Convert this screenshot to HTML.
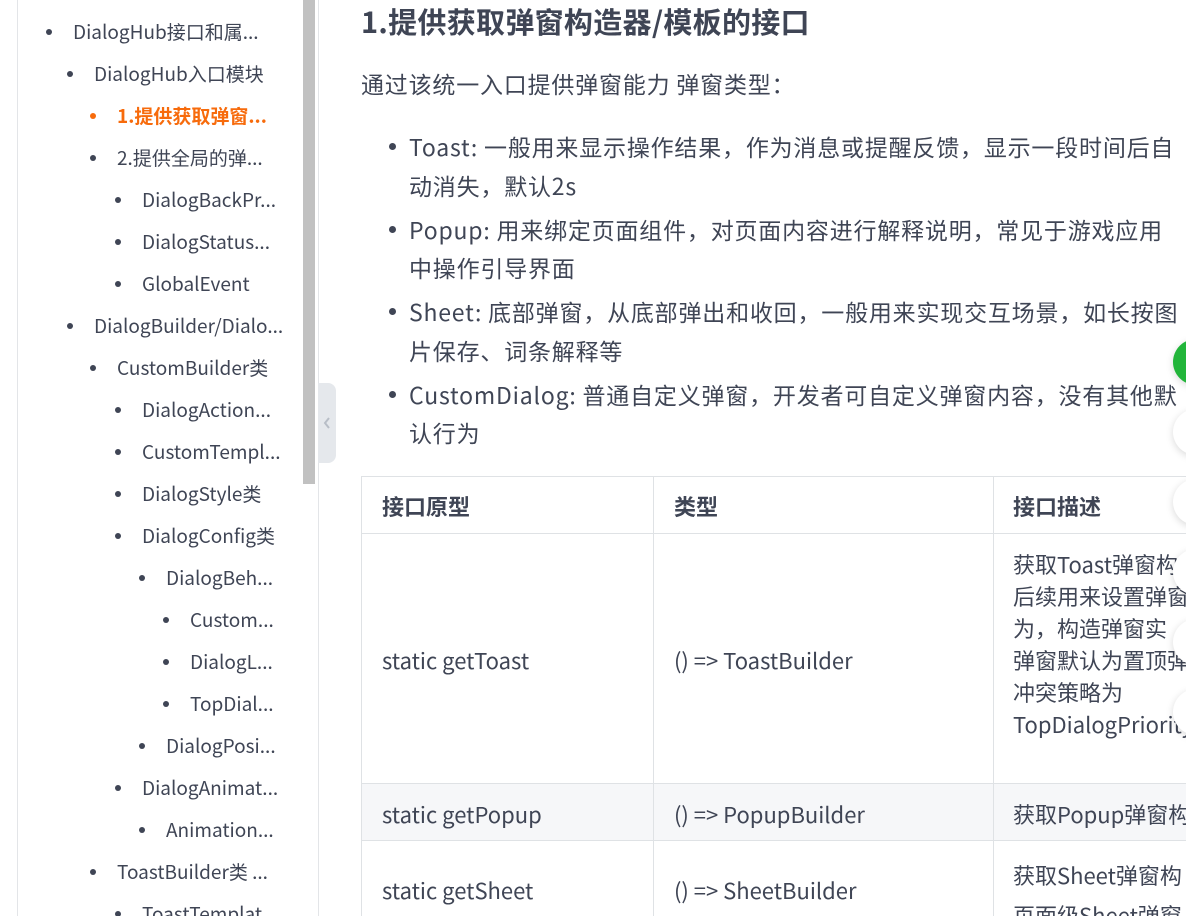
<!DOCTYPE html>
<html><head><meta charset="utf-8"><style>
html,body{margin:0;padding:0;width:1186px;height:916px;overflow:hidden;background:#fff;}
body{font-family:"Noto Sans CJK SC","Liberation Sans",sans-serif;color:#3f4555;position:relative;}
.sb{position:absolute;left:17px;top:0;width:1px;height:916px;background:#e3e5e8;}
.nav div{position:absolute;font-size:19px;white-space:nowrap;line-height:22px;color:#3f4555;}
.nav div::before{content:"";position:absolute;left:-27px;top:8px;width:6px;height:6px;border-radius:50%;background:#3f4555;}
.nav .act{color:#f76b0c;font-weight:bold;}
.nav .act::before{background:#f76b0c;}
.scroll{position:absolute;left:303px;top:0;width:12px;height:484px;background:#c1c1c1;}
.vline{position:absolute;left:318px;top:0;width:1px;height:916px;background:#e3e5e8;}
.tab{position:absolute;left:318px;top:383px;width:18px;height:80px;background:#e5e8ec;border-radius:0 8px 8px 0;}
.m{position:absolute;white-space:nowrap;font-size:23px;letter-spacing:0.8px;line-height:26px;}
.t{font-size:22px;letter-spacing:0;}
.li::before{content:"";position:absolute;left:-20px;top:10px;width:7px;height:7px;border-radius:50%;background:#3f4555;}
.h{font-weight:bold;font-size:29px;letter-spacing:0.3px;}
.hl{position:absolute;left:361px;width:900px;height:1px;background:#dfe2e5;}
.vl{position:absolute;top:476px;width:1px;height:440px;background:#dfe2e5;}
.circ{position:absolute;left:1173px;width:46px;height:46px;border-radius:50%;background:#fff;box-shadow:0 2px 8px rgba(0,0,0,0.15);}
</style></head><body>
<div class="sb"></div>
<div class="nav">
<div style="left:73px;top:21px">DialogHub接口和属...</div>
<div style="left:94px;top:63px">DialogHub入口模块</div>
<div class="act" style="left:117px;top:105px">1.提供获取弹窗...</div>
<div style="left:117px;top:147px">2.提供全局的弹...</div>
<div style="left:142px;top:189px">DialogBackPr...</div>
<div style="left:142px;top:231px">DialogStatus...</div>
<div style="left:142px;top:273px">GlobalEvent</div>
<div style="left:94px;top:315px">DialogBuilder/Dialo...</div>
<div style="left:117px;top:357px">CustomBuilder类</div>
<div style="left:142px;top:399px">DialogAction...</div>
<div style="left:142px;top:441px">CustomTempl...</div>
<div style="left:142px;top:483px">DialogStyle类</div>
<div style="left:142px;top:525px">DialogConfig类</div>
<div style="left:166px;top:567px">DialogBeh...</div>
<div style="left:190px;top:609px">Custom...</div>
<div style="left:190px;top:651px">DialogL...</div>
<div style="left:190px;top:693px">TopDial...</div>
<div style="left:166px;top:735px">DialogPosi...</div>
<div style="left:142px;top:777px">DialogAnimat...</div>
<div style="left:166px;top:819px">Animation...</div>
<div style="left:117px;top:861px">ToastBuilder类 ...</div>
<div style="left:142px;top:903px">ToastTemplat...</div>
</div>
<div class="scroll"></div>
<div class="vline"></div>
<div class="tab"><svg width="18" height="80"><path d="M11 35 L7 40 L11 45" stroke="#b8bec7" stroke-width="2" fill="none"/></svg></div>

<div class="m h" style="left:361px;top:4px;line-height:34px">1.提供获取弹窗构造器/模板的接口</div>
<div class="m" style="left:361px;top:70px">通过该统一入口提供弹窗能力 弹窗类型：</div>
<div class="m li" style="left:409px;top:133px">Toast: 一般用来显示操作结果，作为消息或提醒反馈，显示一段时间后自</div>
<div class="m" style="left:409px;top:172px">动消失，默认2s</div>
<div class="m li" style="left:409px;top:216px">Popup: 用来绑定页面组件，对页面内容进行解释说明，常见于游戏应用</div>
<div class="m" style="left:409px;top:254px">中操作引导界面</div>
<div class="m li" style="left:409px;top:298px">Sheet: 底部弹窗，从底部弹出和收回，一般用来实现交互场景，如长按图</div>
<div class="m" style="left:409px;top:337px">片保存、词条解释等</div>
<div class="m li" style="left:409px;top:381px">CustomDialog: 普通自定义弹窗，开发者可自定义弹窗内容，没有其他默</div>
<div class="m" style="left:409px;top:419px">认行为</div>

<div style="position:absolute;left:361px;top:783px;width:900px;height:57px;background:#f6f7f9"></div>
<div class="hl" style="top:476px"></div>
<div class="hl" style="top:533px"></div>
<div class="hl" style="top:783px"></div>
<div class="hl" style="top:840px"></div>
<div class="vl" style="left:361px"></div>
<div class="vl" style="left:653px"></div>
<div class="vl" style="left:993px"></div>
<div class="m t" style="left:382px;top:493px;font-weight:bold">接口原型</div>
<div class="m t" style="left:674px;top:493px;font-weight:bold">类型</div>
<div class="m t" style="left:1013px;top:493px;font-weight:bold">接口描述</div>
<div class="m t" style="left:382px;top:647px">static getToast</div>
<div class="m t" style="left:674px;top:647px">() =&gt; ToastBuilder</div>
<div class="m t" style="left:1013px;top:548px;line-height:32px">获取Toast弹窗构<br>后续用来设置弹窗<br>为，构造弹窗实<br>弹窗默认为置顶弹<br>冲突策略为<br>TopDialogPriority</div>
<div class="m t" style="left:382px;top:801px">static getPopup</div>
<div class="m t" style="left:674px;top:801px">() =&gt; PopupBuilder</div>
<div class="m t" style="left:1013px;top:801px">获取Popup弹窗构</div>
<div class="m t" style="left:382px;top:877px">static getSheet</div>
<div class="m t" style="left:674px;top:877px">() =&gt; SheetBuilder</div>
<div class="m t" style="left:1013px;top:855px;line-height:40px">获取Sheet弹窗构<br>页面级Sheet弹窗</div>

<div class="circ" style="top:339px;background:#22b53a"></div>
<div class="circ" style="top:409px"></div>
<div class="circ" style="top:479px"></div>
<div class="circ" style="top:549px"></div>
<div class="circ" style="top:619px"></div>
<div class="circ" style="top:689px"></div>
</body></html>
